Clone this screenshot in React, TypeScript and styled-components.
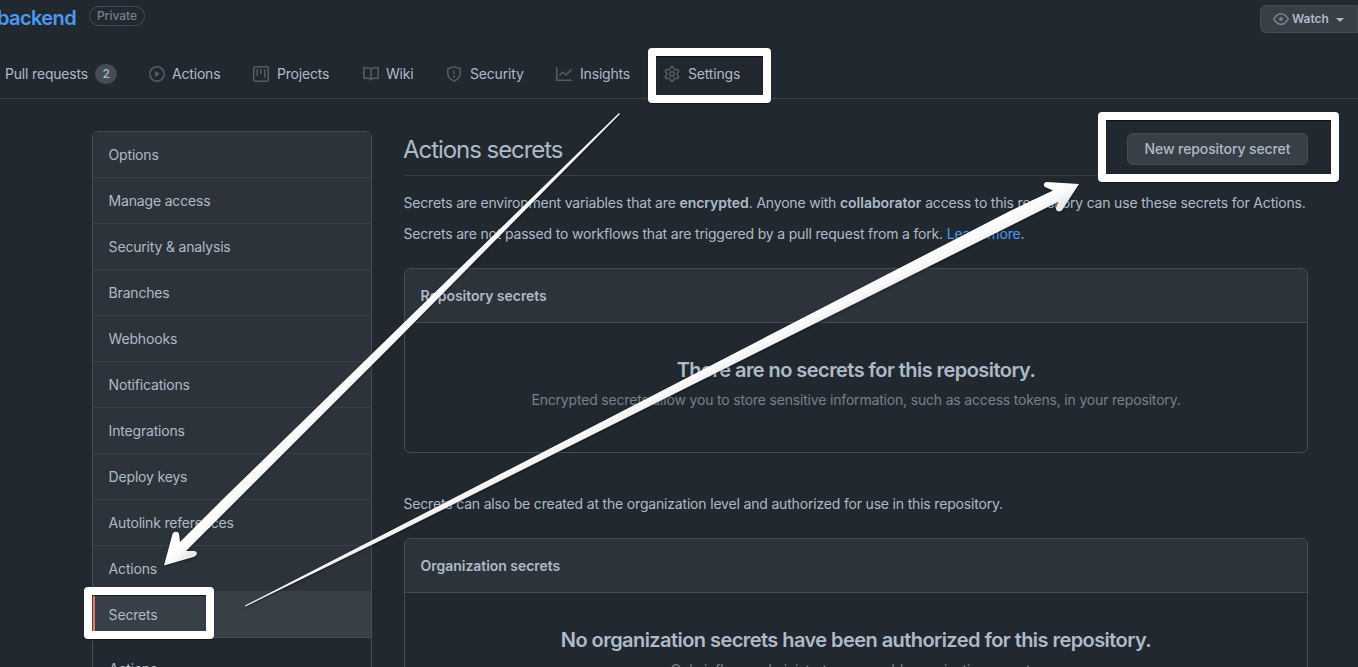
import React from "react";
import styled, { createGlobalStyle } from "styled-components";

const c = {
  canvas: "#22282f",
  subtle: "#2d333a",
  raised: "#383f46",
  border: "#444c55",
  text: "#adbbc8",
  muted: "#75818d",
  icon: "#545d68",
  link: "#4a9af3",
  accent: "#ec775c",
};

const GlobalStyle = createGlobalStyle`
  * { box-sizing: border-box; }
  html, body { margin: 0; background: ${c.canvas}; }
  body {
    height: 667px;
    overflow: hidden;
    color: ${c.text};
    font-family: Inter, "Liberation Sans", sans-serif;
    font-size: 14px;
    line-height: 21px;
    letter-spacing: -0.18px;
  }
`;

const Page = styled.div`
  position: relative;
  width: 1358px;
  height: 667px;
  overflow: hidden;
`;

const Header = styled.header`
  height: 99px;
  border-bottom: 1px solid ${c.raised};
`;

const RepoBar = styled.div`
  display: flex;
  height: 50px;
  align-items: flex-start;
  padding-top: 5px;
`;

const RepoName = styled.a`
  margin: 1px 0 0 -3px;
  color: ${c.link};
  font-size: 20px;
  font-weight: 600;
  line-height: 24px;
  letter-spacing: -0.6px;
  width: 92px;
`;

const Badge = styled.span`
  width: 56px;
  height: 20px;
  margin-top: 1px;
  border: 1px solid ${c.border};
  border-radius: 10px;
  color: ${c.muted};
  font-size: 12px;
  font-weight: 500;
  line-height: 18px;
  letter-spacing: 0;
  text-align: center;
`;

const WatchButton = styled.button`
  display: flex;
  align-items: center;
  width: 98px;
  height: 28px;
  margin-left: auto;
  padding: 0 12px;
  border: 1px solid ${c.border};
  border-radius: 6px 0 0 6px;
  background: ${c.raised};
  color: ${c.text};
  font: 600 12px/18px Inter, sans-serif;
  svg { color: ${c.muted}; margin-right: 3px; }
`;

const Caret = styled.i`
  margin-left: 7px;
  margin-top: 2px;
  border: 4px solid transparent;
  border-top-color: ${c.text};
  border-bottom: 0;
`;

const Nav = styled.nav`
  display: flex;
  height: 48px;
  padding-left: 5px;
`;

const Tab = styled.a<{ $w: number; $gap?: number }>`
  display: flex;
  flex: 0 0 ${(p) => p.$w}px;
  align-items: center;
  gap: ${(p) => p.$gap ?? 8}px;
  svg { color: ${c.icon}; }
`;

const TabLabel = styled.span`
  padding-bottom: 1px;
  line-height: 20px;
`;

const Counter = styled.span`
  width: 22px;
  height: 20px;
  border-radius: 10px;
  background: ${c.border};
  font-size: 12px;
  font-weight: 500;
  line-height: 20px;
  text-align: center;
`;

const Layout = styled.div`
  display: flex;
  gap: 32px;
  padding: 32px 50px 0 92px;
`;

const Menu = styled.aside`
  width: 280px;
  height: 700px;
  flex: none;
  border: 1px solid ${c.border};
  border-radius: 6px;
  overflow: hidden;
`;

const MenuItem = styled.a<{ $active?: boolean }>`
  display: block;
  height: 46px;
  padding-left: ${(p) => (p.$active ? 13.6 : 15.6)}px;
  line-height: 46px;
  border-bottom: 1px solid ${(p) => (p.$active ? c.border : c.raised)};
  border-left: ${(p) => (p.$active ? `2px solid ${c.accent}` : "0")};
  background: ${(p) => (p.$active ? c.raised : c.subtle)};
`;

const SubItem = styled.a`
  display: block;
  padding: 20px 0 0 16px;
`;

const Main = styled.main`
  width: 904px;
  height: 700px;
`;

const TitleRow = styled.div`
  display: flex;
  height: 45px;
  justify-content: space-between;
  border-bottom: 1px solid ${c.raised};
`;

const Title = styled.h2`
  margin: 1px 0 0 -1px;
  font-size: 24px;
  font-weight: 400;
  line-height: 36px;
  letter-spacing: -1.05px;
`;

const Button = styled.button`
  width: 181px;
  height: 32px;
  margin-top: 2px;
  padding: 0;
  border: 1px solid ${c.border};
  border-radius: 6px;
  background: ${c.raised};
  color: ${c.text};
  font: 500 14px/20px Inter, sans-serif;
  letter-spacing: -0.1px;
`;

const Text = styled.p<{ $top: number }>`
  margin: ${(p) => p.$top}px 0 0 -0.5px;
  white-space: nowrap;
  b { font-weight: 600; letter-spacing: -0.02px; }
  a { color: ${c.link}; }
`;

const Box = styled.section<{ $top: number }>`
  height: 185px;
  margin-top: ${(p) => p.$top}px;
  border: 1px solid ${c.border};
  border-radius: 6px;
  overflow: hidden;
`;

const BoxHeader = styled.h3`
  height: 54px;
  margin: 0;
  padding-left: 15.6px;
  border-bottom: 1px solid ${c.border};
  background: ${c.subtle};
  font-size: 14px;
  font-weight: 600;
  line-height: 54px;
  letter-spacing: -0.04px;
`;

const Blank = styled.div`
  padding-top: 32px;
  text-align: center;
  white-space: nowrap;
`;

const BlankTitle = styled.h4`
  margin: 0;
  font-size: 20px;
  font-weight: 600;
  line-height: 30px;
  letter-spacing: -0.56px;
`;

const BlankText = styled.p`
  margin: 4px 0 0;
  color: ${c.muted};
`;

const Highlight = styled.div<{ $x: number; $y: number; $w: number; $h: number }>`
  position: absolute;
  left: ${(p) => p.$x}px;
  top: ${(p) => p.$y}px;
  width: ${(p) => p.$w}px;
  height: ${(p) => p.$h}px;
  border: 8px solid #fff;
  border-radius: 4px;
  box-shadow: 0 1px 1px rgba(0, 0, 0, 0.45), inset 0 1px 1px rgba(0, 0, 0, 0.6);
`;

const Arrows = styled.svg`
  position: absolute;
  inset: 0;
  filter: drop-shadow(0 1px 1px rgba(0, 0, 0, 0.5));
`;

const icons = {
  play: "M1.5 8a6.5 6.5 0 1113 0 6.5 6.5 0 01-13 0zM8 0a8 8 0 100 16A8 8 0 008 0zM6.379 5.227A.25.25 0 006 5.442v5.117a.25.25 0 00.379.214l4.264-2.559a.25.25 0 000-.428L6.379 5.227z",
  project:
    "M1.75 0A1.75 1.75 0 000 1.75v12.5C0 15.216.784 16 1.75 16h12.5A1.75 1.75 0 0016 14.25V1.75A1.75 1.75 0 0014.25 0H1.75zM1.5 1.75a.25.25 0 01.25-.25h12.5a.25.25 0 01.25.25v12.5a.25.25 0 01-.25.25H1.75a.25.25 0 01-.25-.25V1.75zM11.75 3a.75.75 0 00-.75.75v7.5a.75.75 0 001.5 0v-7.5a.75.75 0 00-.75-.75zm-8.25.75a.75.75 0 011.5 0v5.5a.75.75 0 01-1.5 0v-5.5zM8 3a.75.75 0 00-.75.75v3.5a.75.75 0 001.5 0v-3.5A.75.75 0 008 3z",
  book: "M0 1.75A.75.75 0 01.75 1h4.253c1.227 0 2.317.59 3 1.501A3.744 3.744 0 0111.006 1h4.245a.75.75 0 01.75.75v10.5a.75.75 0 01-.75.75h-4.507a2.25 2.25 0 00-1.591.659l-.622.621a.75.75 0 01-1.06 0l-.622-.621A2.25 2.25 0 005.258 13H.75a.75.75 0 01-.75-.75V1.75zm8.755 3a2.25 2.25 0 012.25-2.25H14.5v9h-3.757c-.71 0-1.4.201-1.992.572l.004-7.322zm-1.504 7.324l.004-5.073-.002-2.253A2.25 2.25 0 005.003 2.5H1.5v9h3.757a3.75 3.75 0 011.994.574z",
  shield:
    "M7.467.133a1.75 1.75 0 011.066 0l5.25 1.68A1.75 1.75 0 0115 3.48V7c0 1.566-.32 3.182-1.303 4.682-.983 1.498-2.585 2.813-5.032 3.855a1.7 1.7 0 01-1.33 0c-2.447-1.042-4.049-2.357-5.032-3.855C1.32 10.182 1 8.566 1 7V3.48a1.75 1.75 0 011.217-1.667l5.25-1.68zm.61 1.429a.25.25 0 00-.153 0l-5.25 1.68a.25.25 0 00-.174.238V7c0 1.358.275 2.666 1.057 3.86.784 1.194 2.121 2.34 4.366 3.297a.2.2 0 00.154 0c2.245-.956 3.582-2.104 4.366-3.298C13.225 9.666 13.5 8.36 13.5 7V3.48a.25.25 0 00-.174-.237l-5.25-1.68zM9 10.5a1 1 0 11-2 0 1 1 0 012 0zm-.25-5.75a.75.75 0 10-1.5 0v3a.75.75 0 001.5 0v-3z",
  graph:
    "M1.5 1.75a.75.75 0 00-1.5 0v12.5c0 .414.336.75.75.75h14.5a.75.75 0 000-1.5H1.5V1.75zm14.28 2.53a.75.75 0 00-1.06-1.06L10 7.94 7.53 5.47a.75.75 0 00-1.06 0L3.22 8.72a.75.75 0 001.06 1.06L7 7.06l2.47 2.47a.75.75 0 001.06 0l5.25-5.25z",
  gear: "M7.429 1.525a6.593 6.593 0 011.142 0c.036.003.108.036.137.146l.289 1.105c.147.56.55.967.997 1.189.174.086.341.183.501.29.417.278.97.423 1.53.27l1.102-.303c.11-.03.175.016.195.046.219.31.41.641.573.989.014.031.022.11-.059.19l-.815.806c-.411.406-.562.957-.53 1.456a4.588 4.588 0 010 .582c-.032.499.119 1.05.53 1.456l.815.806c.08.08.073.159.059.19a6.494 6.494 0 01-.573.99c-.02.029-.086.074-.195.045l-1.103-.303c-.559-.153-1.112-.008-1.529.27-.16.107-.327.204-.5.29-.449.222-.851.628-.998 1.189l-.289 1.105c-.029.11-.101.143-.137.146a6.613 6.613 0 01-1.142 0c-.036-.003-.108-.037-.137-.146l-.289-1.105c-.147-.56-.55-.967-.997-1.189a4.502 4.502 0 01-.501-.29c-.417-.278-.97-.423-1.53-.27l-1.102.303c-.11.03-.175-.016-.195-.046a6.492 6.492 0 01-.573-.989c-.014-.031-.022-.11.059-.19l.815-.806c.411-.406.562-.957.53-1.456a4.587 4.587 0 010-.582c.032-.499-.119-1.05-.53-1.456l-.815-.806c-.08-.08-.073-.159-.059-.19a6.44 6.44 0 01.573-.99c.02-.029.086-.075.195-.045l1.103.303c.559.153 1.112.008 1.529-.27.16-.107.327-.204.5-.29.449-.222.851-.628.998-1.189l.289-1.105c.029-.11.101-.143.137-.146zM8 0c-.236 0-.47.01-.701.03-.743.065-1.29.615-1.458 1.261l-.29 1.106c-.017.066-.078.158-.211.224a5.994 5.994 0 00-.668.386c-.123.082-.233.09-.3.071L3.27 2.776c-.644-.177-1.392.02-1.82.63a7.977 7.977 0 00-.704 1.217c-.315.675-.111 1.422.363 1.891l.815.806c.05.048.098.147.088.294a6.084 6.084 0 000 .772c.01.147-.038.246-.088.294l-.815.806c-.474.469-.678 1.216-.363 1.891.2.428.436.835.704 1.218.428.609 1.176.806 1.82.63l1.103-.303c.066-.019.176-.011.299.071.213.143.436.272.668.386.133.066.194.158.212.224l.289 1.106c.169.646.715 1.196 1.458 1.26a8.094 8.094 0 001.402 0c.743-.064 1.29-.614 1.458-1.26l.29-1.106c.017-.066.078-.158.211-.224a5.98 5.98 0 00.668-.386c.123-.082.233-.09.3-.071l1.102.302c.644.177 1.392-.02 1.82-.63.268-.382.505-.789.704-1.217.315-.675.111-1.422-.364-1.891l-.814-.806c-.05-.048-.098-.147-.088-.294a6.1 6.1 0 000-.772c-.01-.147.039-.246.088-.294l.814-.806c.475-.469.679-1.216.364-1.891a7.992 7.992 0 00-.704-1.218c-.428-.609-1.176-.806-1.82-.63l-1.103.303c-.066.019-.176.011-.299-.071a5.991 5.991 0 00-.668-.386c-.133-.066-.194-.158-.212-.224L10.16 1.29C9.99.645 9.444.095 8.701.031A8.094 8.094 0 008 0zm1.5 8a1.5 1.5 0 11-3 0 1.5 1.5 0 013 0zM11 8a3 3 0 11-6 0 3 3 0 016 0z",
  eye: "M1.679 7.932c.412-.621 1.242-1.75 2.366-2.717C5.175 4.242 6.527 3.5 8 3.5c1.473 0 2.824.742 3.955 1.715 1.124.967 1.954 2.096 2.366 2.717a.119.119 0 010 .136c-.412.621-1.242 1.75-2.366 2.717C10.825 11.758 9.473 12.5 8 12.5c-1.473 0-2.824-.742-3.955-1.715C2.92 9.818 2.09 8.69 1.679 8.068a.119.119 0 010-.136zM8 2c-1.981 0-3.67.992-4.933 2.078C1.797 5.169.88 6.423.43 7.1a1.619 1.619 0 000 1.798c.45.678 1.367 1.932 2.637 3.024C4.329 13.008 6.019 14 8 14c1.981 0 3.67-.992 4.933-2.078 1.27-1.091 2.187-2.345 2.637-3.023a1.619 1.619 0 000-1.798c-.45-.678-1.367-1.932-2.637-3.023C11.671 2.992 9.981 2 8 2zm0 8a2 2 0 100-4 2 2 0 000 4z",
};

const Icon = ({ name }: { name: keyof typeof icons }) => (
  <svg width="16" height="16" viewBox="0 0 16 16" fill="currentColor" fillRule="evenodd">
    <path d={icons[name]} />
  </svg>
);

const tabs: { icon: keyof typeof icons; label: string; w: number; gap?: number }[] = [
  { icon: "play", label: "Actions", w: 104, gap: 7 },
  { icon: "project", label: "Projects", w: 110 },
  { icon: "book", label: "Wiki", w: 83, gap: 7 },
  { icon: "shield", label: "Security", w: 110 },
  { icon: "graph", label: "Insights", w: 108 },
  { icon: "gear", label: "Settings", w: 100 },
];

const menu = [
  "Options",
  "Manage access",
  "Security & analysis",
  "Branches",
  "Webhooks",
  "Notifications",
  "Integrations",
  "Deploy keys",
  "Autolink references",
  "Actions",
  "Secrets",
];

export default function App() {
  return (
    <Page>
      <GlobalStyle />
      <Header>
        <RepoBar>
          <RepoName>backend</RepoName>
          <Badge>Private</Badge>
          <WatchButton>
            <Icon name="eye" />
            Watch
            <Caret />
          </WatchButton>
        </RepoBar>
        <Nav>
          <Tab $w={144} $gap={7}>
            <TabLabel>Pull requests</TabLabel>
            <Counter>2</Counter>
          </Tab>
          {tabs.map((t) => (
            <Tab key={t.label} $w={t.w} $gap={t.gap}>
              <Icon name={t.icon} />
              <TabLabel>{t.label}</TabLabel>
            </Tab>
          ))}
        </Nav>
      </Header>
      <Layout>
        <Menu>
          {menu.map((m) => (
            <MenuItem key={m} $active={m === "Secrets"}>
              {m}
            </MenuItem>
          ))}
          <SubItem>Actions</SubItem>
        </Menu>
        <Main>
          <TitleRow>
            <Title>Actions secrets</Title>
            <Button>New repository secret</Button>
          </TitleRow>
          <Text $top={16}>
            Secrets are environment variables that are <b>encrypted</b>. Anyone with <b>collaborator</b> access to this
            repository can use these secrets for Actions.
          </Text>
          <Text $top={10}>
            Secrets are not passed to workflows that are triggered by a pull request from a fork. <a>Learn more</a>.
          </Text>
          <Box $top={24}>
            <BoxHeader>Repository secrets</BoxHeader>
            <Blank>
              <BlankTitle>There are no secrets for this repository.</BlankTitle>
              <BlankText>
                Encrypted secrets allow you to store sensitive information, such as access tokens, in your repository.
              </BlankText>
            </Blank>
          </Box>
          <Text $top={40}>
            Secrets can also be created at the organization level and authorized for use in this repository.
          </Text>
          <Box $top={24}>
            <BoxHeader>Organization secrets</BoxHeader>
            <Blank>
              <BlankTitle>No organization secrets have been authorized for this repository.</BlankTitle>
              <BlankText>Only influxer administrators can add organization secrets.</BlankText>
            </Blank>
          </Box>
        </Main>
      </Layout>
      <Highlight $x={648} $y={48} $w={123} $h={55} />
      <Highlight $x={1098} $y={112} $w={241} $h={70} />
      <Highlight $x={84} $y={587} $w={130} $h={52} />
      <Arrows width="1358" height="667" viewBox="0 0 1358 667">
        <defs>
          <linearGradient id="down" gradientUnits="userSpaceOnUse" x1="200" y1="520" x2="212" y2="532">
            <stop offset="0" stopColor="#fff" />
            <stop offset="0.45" stopColor="#fbfbfb" />
            <stop offset="1" stopColor="#e9e9e9" />
          </linearGradient>
          <linearGradient id="up" gradientUnits="userSpaceOnUse" x1="1026" y1="202" x2="1034" y2="218">
            <stop offset="0" stopColor="#fff" />
            <stop offset="0.45" stopColor="#fafafa" />
            <stop offset="1" stopColor="#e9e9e9" />
          </linearGradient>
        </defs>
        <path
          fill="url(#down)"
          d="M619 113L222 500L180 542L179 534C178.500 531 173.500 531 172.500 534L164 565.500L193.500 557C198.500 555 197.500 550.500 193.500 551L186 551L237 500L397 340L620 114Z"
        />
        <path
          fill="url(#up)"
          d="M245 605.500L390 531L1010 211L1053 190.500L1046 187.500C1042.500 186 1043.500 182 1047 182L1079 184L1062.500 209.500C1060 213 1055.500 211.500 1056 208L1058 202L1010 226L390 536L245.500 606.500Z"
        />
      </Arrows>
    </Page>
  );
}
